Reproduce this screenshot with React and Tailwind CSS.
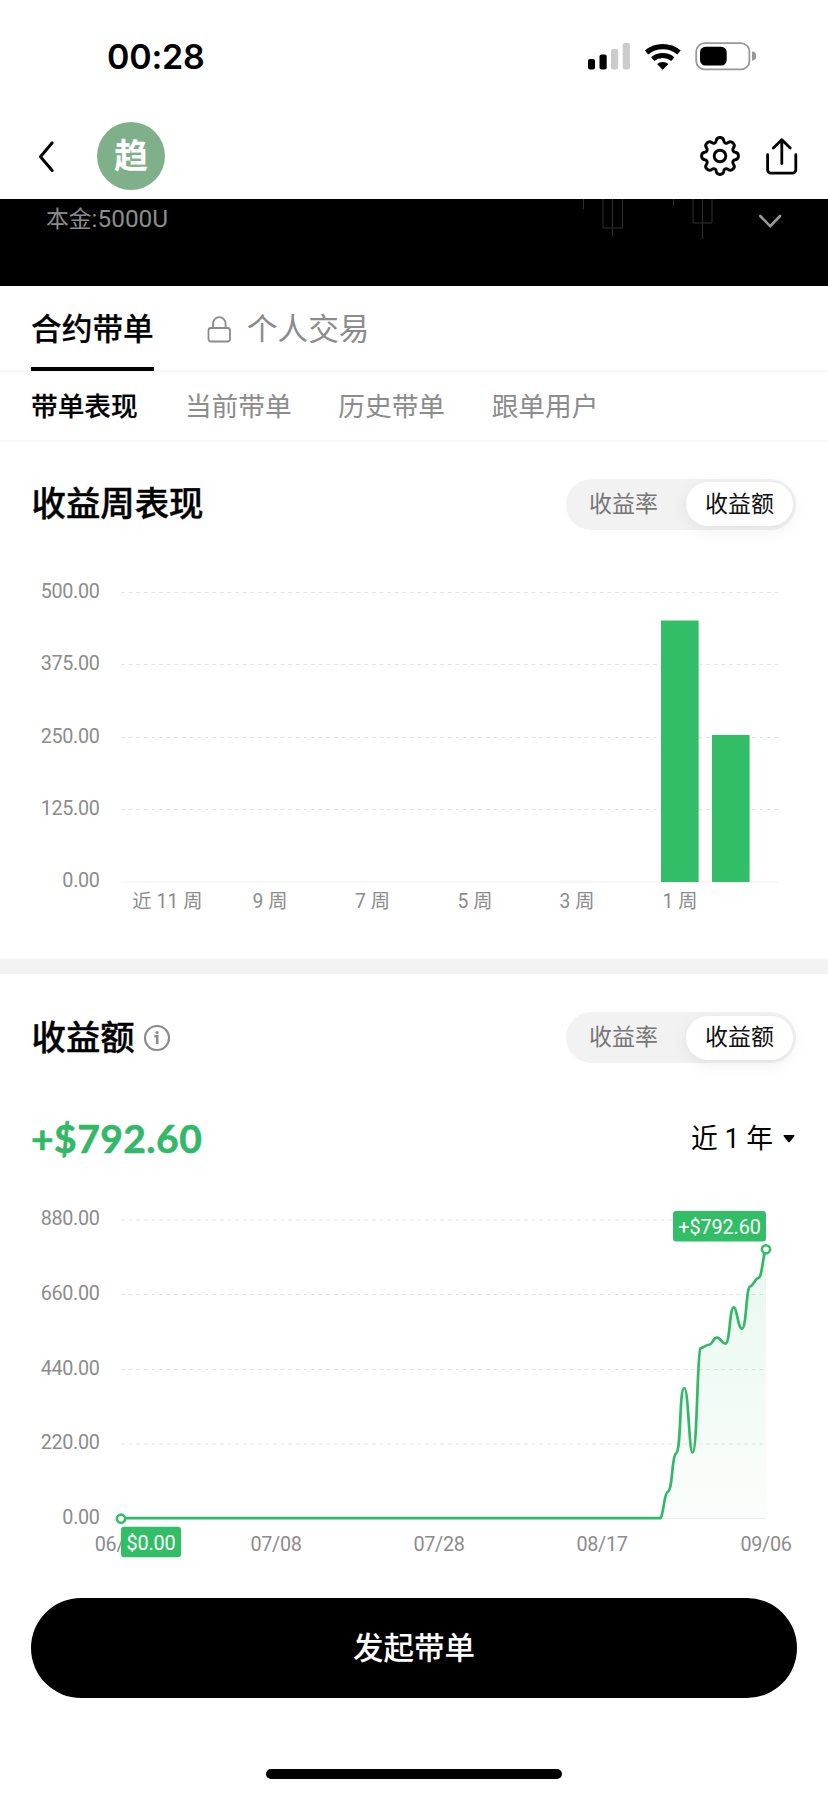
const weekTicks = [
  { label: "500.00", y: 32.5 },
  { label: "375.00", y: 104.5 },
  { label: "250.00", y: 177.5 },
  { label: "125.00", y: 249.5 },
  { label: "0.00", y: 322 },
];

const weekLabels = [
  { label: "近 11 周", x: 167.5 },
  { label: "9 周", x: 270 },
  { label: "7 周", x: 372.5 },
  { label: "5 周", x: 475 },
  { label: "3 周", x: 577 },
  { label: "1 周", x: 680 },
];

const weekBars = [
  { x: 661, y: 60.5 },
  { x: 712, y: 175 },
];

const profitTicks = [
  { label: "880.00", y: 20 },
  { label: "660.00", y: 94.5 },
  { label: "440.00", y: 169.5 },
  { label: "220.00", y: 244 },
  { label: "0.00", y: 318.5 },
];

const profitLabels = [
  { label: "06/", x: 109.5 },
  { label: "07/08", x: 276 },
  { label: "07/28", x: 439 },
  { label: "08/17", x: 602 },
  { label: "09/06", x: 766 },
];

const profitLine =
  "M121 318.2 H660.7 C663.5 313 664.5 293 667.5 292 C673 290.5 671.5 256 676 253.5 C681.5 251 679 188 684.3 188 C688.5 188 689 252.5 692.5 252.5 C697.5 252.5 697 152 700.5 148.3 C703.5 147.5 706 145 709.5 144.5 C713 143.8 713 137.7 717 137.7 C721 137.7 722 143.7 725.5 143.7 C730 143.7 729.5 107.3 733.7 107.3 C737 107.3 738 128.7 742 128.7 C746.5 128.7 746 88 750 86.5 C753.5 85.5 755 78.8 758.3 78 C762.5 77 763 52 766 49.5";

function gearPath() {
  const point = (deg) => {
    const a = ((deg - 90) * Math.PI) / 180;
    return `${(21 + 15.6 * Math.cos(a)).toFixed(2)} ${(21 + 15.6 * Math.sin(a)).toFixed(2)}`;
  };
  let d = `M${point(-14)}`;
  for (let i = 0; i < 8; i++) {
    d += ` A3.8 3.8 0 0 1 ${point(i * 45 + 14)}`;
    d += ` A2.6 2.6 0 0 0 ${point(i * 45 + 31)}`;
  }
  return d + "Z";
}

function StatusBar() {
  return (
    <div className="flex h-[113px] items-center justify-between pl-[107px] pr-[72px]">
      <span className="font-[Inter] text-[34px] font-semibold leading-none tracking-[-0.2px]">00:28</span>
      <svg width="170" height="32" viewBox="586 40.5 170 32" fill="none">
        <rect x="588" y="58.5" width="7" height="10.5" rx="2" fill="#000" />
        <rect x="599.5" y="54" width="7.2" height="15" rx="2" fill="#000" />
        <rect x="611" y="48.5" width="7.2" height="20.5" rx="2" fill="#ccc" />
        <rect x="622.7" y="42.5" width="7.2" height="26.5" rx="2" fill="#ccc" />
        <path d="M646.5 52 A25.5 25.5 0 0 1 679 52" stroke="#000" strokeWidth="5.2" />
        <path d="M652.7 58.6 A16 16 0 0 1 672.8 58.6" stroke="#000" strokeWidth="5" />
        <path d="M657 63.6 A9 9 0 0 1 668.5 63.6 L662.7 69.2 Z" fill="#000" />
        <rect x="696.2" y="42.7" width="53.2" height="26.2" rx="8.5" stroke="#999" strokeWidth="1.8" />
        <rect x="700" y="46.2" width="26.7" height="18.8" rx="5.5" fill="#000" />
        <path d="M752 51 a4.6 4.6 0 0 1 0 9.2Z" fill="#999" />
      </svg>
    </div>
  );
}

function Header() {
  return (
    <div className="flex h-[85.5px] items-center pl-[36px] pr-[28px]">
      <svg width="20" height="36" viewBox="0 0 20 36" fill="none" stroke="#000" strokeWidth="3" strokeLinecap="round" strokeLinejoin="round">
        <path d="M16.2 4.8 L4.5 18.8 L16.2 32.5" />
      </svg>
      <div className="ml-[41px] flex size-[68px] items-center justify-center rounded-full bg-[#7fb08a] text-[34px] font-bold leading-none text-white">
        趋
      </div>
      <svg className="ml-auto" width="42" height="42" viewBox="0 0 42 42" fill="none" stroke="#000" strokeWidth="2.9" strokeLinejoin="round">
        <path d={gearPath()} />
        <circle cx="21" cy="21" r="5.8" />
      </svg>
      <svg className="ml-[23px]" width="36" height="42" viewBox="0 0 36 42" fill="none" stroke="#000" strokeWidth="2.8" strokeLinecap="round" strokeLinejoin="round">
        <path d="M3.6 19.7 V34.7 a3.5 3.5 0 0 0 3.5 3.5 H28.3 a3.5 3.5 0 0 0 3.5 -3.5 V19.7" />
        <path d="M17.8 28.5 V5 M9.3 13 L17.8 4.7 L26.2 13" />
      </svg>
    </div>
  );
}

function Banner() {
  return (
    <div className="flex h-[87px] items-start justify-between bg-black pl-[46px]">
      <span className="pt-[8px] text-[22.8px] leading-[24px] text-[#8c8c8c]">
        本金<span className="text-[24.4px]">:5000U</span>
      </span>
      <svg width="258" height="87" viewBox="570 198.5 258 87" fill="none">
        <path
          d="M583.5 198.5 V209 M612.5 198.5 V235.5 M603 198.5 V227.5 H622.5 V198.5 M673.5 198.5 V206 M702.5 198.5 V238.5 M693 198.5 V222.5 H712 V198.5"
          stroke="#303030"
        />
        <path d="M760.3 215.5 L770.2 225.6 L780 215.5" stroke="#999" strokeWidth="2.6" strokeLinecap="round" />
      </svg>
    </div>
  );
}

function Tabs() {
  return (
    <>
      <div className="flex h-[86px] border-b-2 border-[#f7f7f7] pl-[31px] text-[30.7px] leading-[88px]">
        <div className="h-[85px] border-b-4 border-black font-medium [-webkit-text-stroke:0.2px]">合约带单</div>
        <div className="ml-[53px] flex text-[#8c8c8c]">
          <svg className="mr-[15px] mt-[29px]" width="25" height="30" viewBox="0 0 25 30" fill="none" stroke="#8c8c8c" strokeWidth="1.8">
            <rect x="1.5" y="13" width="21.5" height="13.5" rx="2.5" />
            <path d="M6 13 V8.5 a6.3 6.3 0 0 1 12.6 0 V13" />
          </svg>
          个人交易
        </div>
      </div>
      <div className="flex h-[70px] gap-[46.6px] border-b-2 border-[#f9f9f9] pl-[31px] text-[26.7px] leading-[70px] text-[#8c8c8c]">
        <span className="mr-[0.6px] font-medium text-black [-webkit-text-stroke:0.2px]">带单表现</span>
        <span>当前带单</span>
        <span>历史带单</span>
        <span>跟单用户</span>
      </div>
    </>
  );
}

function Toggle() {
  return (
    <div className="flex h-[51px] w-[230px] items-center rounded-full bg-[#f2f2f2] pr-[3px] text-[23px] leading-none">
      <span className="flex-1 pl-[23px] text-[#777]">收益率</span>
      <span className="flex h-[44px] w-[107px] items-center justify-center rounded-full bg-white text-[#111] shadow-[0_4px_16px_rgba(0,0,0,0.07)]">
        收益额
      </span>
    </div>
  );
}

function Axis({ ticks, right }) {
  return ticks.map((tick) => (
    <g key={tick.label}>
      <text x="99.7" y={tick.y + 5} textAnchor="end" fill="#8c8c8c">
        {tick.label}
      </text>
      <line
        x1="121"
        x2={right}
        y1={tick.y}
        y2={tick.y}
        stroke={tick.label === "0.00" ? "#eee" : "#e4e4e4"}
        strokeDasharray={tick.label === "0.00" ? "none" : "4 3.6"}
      />
    </g>
  ));
}

function WeekChart() {
  return (
    <svg className="block shrink-0 font-[Roboto,'Noto_Sans_CJK_SC',sans-serif] text-[19.8px] tracking-[-0.3px]" width="828" height="399" viewBox="0 0 828 399">
      <Axis ticks={weekTicks} right="778" />
      {weekBars.map((bar) => (
        <rect key={bar.x} x={bar.x} y={bar.y} width="37.6" height={322 - bar.y} fill="#32be66" />
      ))}
      {weekLabels.map((item) => (
        <text key={item.label} className="tracking-[0.1px]" x={item.x} y="348.3" textAnchor="middle" fill="#8c8c8c" fontSize="19.3">
          {item.label}
        </text>
      ))}
    </svg>
  );
}

function ProfitChart() {
  return (
    <svg className="block shrink-0 font-[Roboto,'Noto_Sans_CJK_SC',sans-serif] text-[19.8px] tracking-[-0.3px]" width="828" height="397" viewBox="0 0 828 397">
      <defs>
        <linearGradient id="profit" x1="0" y1="0" x2="0" y2="1">
          <stop offset="0" stopColor="#32be66" stopOpacity="0.11" />
          <stop offset="1" stopColor="#32be66" stopOpacity="0.02" />
        </linearGradient>
      </defs>
      <Axis ticks={profitTicks} right="766" />
      <path d={`${profitLine} V318.5 H121Z`} fill="url(#profit)" />
      <path d={profitLine} fill="none" stroke="#32b868" strokeWidth="2.7" strokeLinejoin="round" />
      {profitLabels.map((item) => (
        <text key={item.label} x={item.x} y="350.5" textAnchor="middle" fill="#8c8c8c">
          {item.label}
        </text>
      ))}
      <g fill="#fff" stroke="#32be66" strokeWidth="2.6">
        <circle cx="121" cy="318.7" r="4.1" />
        <circle cx="766" cy="49.3" r="4.1" />
      </g>
      <rect x="121" y="326.7" width="60" height="30.5" rx="3" fill="#32be66" />
      <rect x="673" y="11" width="93" height="30.5" rx="3" fill="#32be66" />
      <g className="tracking-[-0.1px]" fill="#fff" textAnchor="middle">
        <text x="151" y="349.5">$0.00</text>
        <text x="719.5" y="33.7">+$792.60</text>
      </g>
    </svg>
  );
}

export default function App() {
  return (
    <div className="flex h-[1795px] w-[828px] flex-col overflow-hidden bg-white font-[Roboto,'Noto_Sans_CJK_SC',sans-serif] text-black">
      <StatusBar />
      <Header />
      <Banner />
      <Tabs />

      <div className="flex h-[118.5px] shrink-0 items-center justify-between pl-[31.5px] pr-[32px] pt-[7px]">
        <h2 className="text-[34.4px] font-medium leading-none [-webkit-text-stroke:0.4px]">收益周表现</h2>
        <Toggle />
      </div>
      <WeekChart />

      <div className="h-[15px] shrink-0 bg-[#f3f3f3]" />

      <div className="mt-[38px] flex h-[51px] shrink-0 items-center pl-[31.5px] pr-[32px]">
        <h2 className="pt-px text-[34.4px] font-medium leading-none [-webkit-text-stroke:0.4px]">收益额</h2>
        <svg className="ml-[8px] mr-auto" width="28" height="28" viewBox="0 0 28 28" fill="none" stroke="#8c8c8c" strokeWidth="2.2">
          <circle cx="14" cy="14" r="12" />
          <path d="M11.3 12.2 H14.2 V20" strokeWidth="2.6" />
          <circle cx="14" cy="8.6" r="1.6" fill="#8c8c8c" stroke="none" />
        </svg>
        <Toggle />
      </div>
      <div className="flex h-[137px] shrink-0 items-center justify-between pb-[8px] pl-[31px] pr-[33px] pt-[22px]">
        <span className="font-[Lato] text-[39px] font-bold leading-none tracking-[0.45px] text-[#32b868] [-webkit-text-stroke:0.6px]">+$792.60</span>
        <span className="flex items-center gap-[10px] pt-[2px] text-[26.8px] leading-none">
          近 1 年
          <svg width="12" height="8" viewBox="0 0 12 8">
            <path d="M1 0 H11 Q12 0.3 11.3 1.2 L6.8 7 Q6 7.8 5.2 7 L0.7 1.2 Q0 0.3 1 0Z" />
          </svg>
        </span>
      </div>
      <ProfitChart />

      <button className="mx-[31px] mt-[1px] h-[100px] shrink-0 rounded-full bg-black pt-[3px] text-[30.5px] font-medium leading-none text-white">
        发起带单
      </button>
      <div className="mx-auto mt-[71px] h-[10px] w-[296px] shrink-0 rounded-full bg-black" />
    </div>
  );
}
